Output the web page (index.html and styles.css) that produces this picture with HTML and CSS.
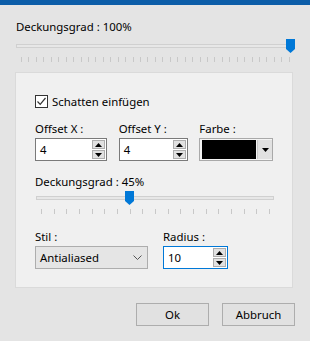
FILE: index.html
```html
<!DOCTYPE html>
<html lang="de">
<head>
<meta charset="utf-8">
<link rel="stylesheet" href="styles.css">
</head>
<body>
<div class="titlebar"></div>
<div class="top">
  <div class="label">Deckungsgrad : 100%</div>
  <div class="slider slider-top">
    <div class="track"></div>
    <svg class="thumb" style="left:270px" width="9" height="14" viewBox="0 0 9 14"><polygon points="0,0 9,0 9,10 4.5,14 0,10" fill="#0078d7"/></svg>
  </div>
  <div class="ticks ticks-top" id="ticks1"></div>
</div>
<div class="panel">
  <label class="check-row">
    <span class="checkbox"><svg width="11" height="11" viewBox="0 0 11 11"><polyline points="1.5,5.5 4.2,8.3 9.5,2" fill="none" stroke="#333" stroke-width="1.2"/></svg></span>
    <span>Schatten einfügen</span>
  </label>
  <div class="fields">
    <div class="field w72">
      <div class="label">Offset X :</div>
      <div class="input">
        <span class="val">4</span>
        <span class="spin"><span class="sb"><svg width="7" height="4" viewBox="0 0 7 4"><polygon points="0,4 7,4 3.5,0" fill="#000"/></svg></span><span class="sb"><svg width="7" height="4" viewBox="0 0 7 4"><polygon points="0,0 7,0 3.5,4" fill="#000"/></svg></span></span>
      </div>
    </div>
    <div class="field w70">
      <div class="label">Offset Y :</div>
      <div class="input">
        <span class="val">4</span>
        <span class="spin"><span class="sb"><svg width="7" height="4" viewBox="0 0 7 4"><polygon points="0,4 7,4 3.5,0" fill="#000"/></svg></span><span class="sb"><svg width="7" height="4" viewBox="0 0 7 4"><polygon points="0,0 7,0 3.5,4" fill="#000"/></svg></span></span>
      </div>
    </div>
    <div class="field w74">
      <div class="label">Farbe :</div>
      <div class="colorbox">
        <span class="swatch"></span>
        <span class="cdrop"><svg width="7" height="4" viewBox="0 0 7 4"><polygon points="0,0 7,0 3.5,4" fill="#000"/></svg></span>
      </div>
    </div>
  </div>
  <div class="label mid-label">Deckungsgrad : 45%</div>
  <div class="slider slider-mid">
    <div class="track"></div>
    <svg class="thumb" style="left:89px" width="9" height="14" viewBox="0 0 9 14"><polygon points="0,0 9,0 9,10 4.5,14 0,10" fill="#0078d7"/></svg>
  </div>
  <div class="ticks ticks-mid" id="ticks2"></div>
  <div class="fields fields-bottom">
    <div class="field w113">
      <div class="label">Stil :</div>
      <div class="select">
        <span>Antialiased</span>
        <svg width="9" height="5" viewBox="0 0 9 5"><polyline points="0.5,0.5 4.5,4.5 8.5,0.5" fill="none" stroke="#555" stroke-width="1"/></svg>
      </div>
    </div>
    <div class="field w65">
      <div class="label">Radius :</div>
      <div class="input focus">
        <span class="val">10</span>
        <span class="spin"><span class="sb"><svg width="7" height="4" viewBox="0 0 7 4"><polygon points="0,4 7,4 3.5,0" fill="#000"/></svg></span><span class="sb"><svg width="7" height="4" viewBox="0 0 7 4"><polygon points="0,0 7,0 3.5,4" fill="#000"/></svg></span></span>
      </div>
    </div>
  </div>
</div>
<div class="buttons">
  <button class="btn">Ok</button>
  <button class="btn">Abbruch</button>
</div>
<script>
function mk(id, n){var e=document.getElementById(id);for(var i=0;i<n;i++){var s=document.createElement('span');e.appendChild(s);}}
mk('ticks1',37);mk('ticks2',19);
</script>
</body>
</html>
```
FILE: styles.css
```css
* { box-sizing: border-box; }
html, body { margin: 0; padding: 0; }
body {
  width: 310px;
  height: 341px;
  overflow: hidden;
  background: #e4e4e4;
  font-family: "Noto Sans", "Segoe UI", sans-serif;
  font-size: 11.4px;
  line-height: 16px;
  color: #000;
}
.titlebar { height: 5px; background: #0c5da8; }
.top { padding: 14px 17px 0 16px; }
.label { white-space: nowrap; }
.slider { position: relative; height: 14px; margin-top: 4px; }
.track {
  position: absolute; left: 0; right: 0; top: 5px; height: 4px;
  background: #e7e7e7; border: 1px solid #d0d0d0;
}
.thumb { position: absolute; top: 0; }
.ticks { display: flex; justify-content: space-between; height: 5px; }
.ticks span { width: 1px; height: 5px; background: #c8c8c8; }
.ticks-top { margin: 4px 3px 0 5px; }
.panel {
  margin: 10px 17px 0 15px;
  height: 216px;
  background: #f0f0f0;
  border: 1px solid #dadada;
  padding: 22px 19px 0 19px;
}
.check-row { display: flex; align-items: center; gap: 4px; height: 13px; }
.checkbox {
  width: 13px; height: 13px; border: 1px solid #333; background: #fff;
  display: flex; align-items: center; justify-content: center;
}
.fields { display: flex; gap: 12px; margin-top: 13px; }
.field { display: flex; flex-direction: column; gap: 1px; }
.w72 { width: 72px; }
.w70 { width: 70px; margin-right: -1px; }
.w74 { width: 74px; }
.w113 { width: 113px; }
.w65 { width: 65px; margin-left: 3px; }
.input {
  height: 23px; border: 1px solid #7a7a7a; background: #fff;
  display: flex; align-items: center; justify-content: space-between;
  padding: 0 1px 0 4px;
}
.input.focus { border-color: #0078d7; }
.spin { display: flex; flex-direction: column; gap: 1px; }
.sb {
  width: 13px; height: 9px; background: #e1e1e1; border: 1px solid #adadad;
  display: flex; align-items: center; justify-content: center;
}
.colorbox {
  height: 23px; border: 1px solid #a9a9a9; background: #f4f4f4;
  display: flex; padding: 1px 0 1px 2px; gap: 1px;
}
.swatch { width: 54px; background: #000; }
.cdrop {
  flex: 1; background: #e1e1e1; border-left: 1px solid #c8c8c8;
  display: flex; align-items: center; justify-content: center;
}
.mid-label { margin-top: 13px; }
.slider-mid { margin-top: 1px; width: 238px; margin-left: 1px; }
.ticks-mid { margin: 4px 0 0 6px; width: 229px; }
.fields-bottom { margin-top: 15px; gap: 12px; }
.select {
  height: 23px; border: 1px solid #adadad; background: #e5e5e5;
  display: flex; align-items: center; justify-content: space-between;
  padding: 0 5px 0 4px;
}
.buttons { display: flex; justify-content: flex-end; gap: 13px; margin: 15px 15px 0 0; }
.btn {
  width: 73px; height: 23px; background: #e1e1e1; border: 1px solid #adadad;
  font-family: inherit; font-size: 11.4px; color: #000; padding: 0; margin: 0;
}
```
